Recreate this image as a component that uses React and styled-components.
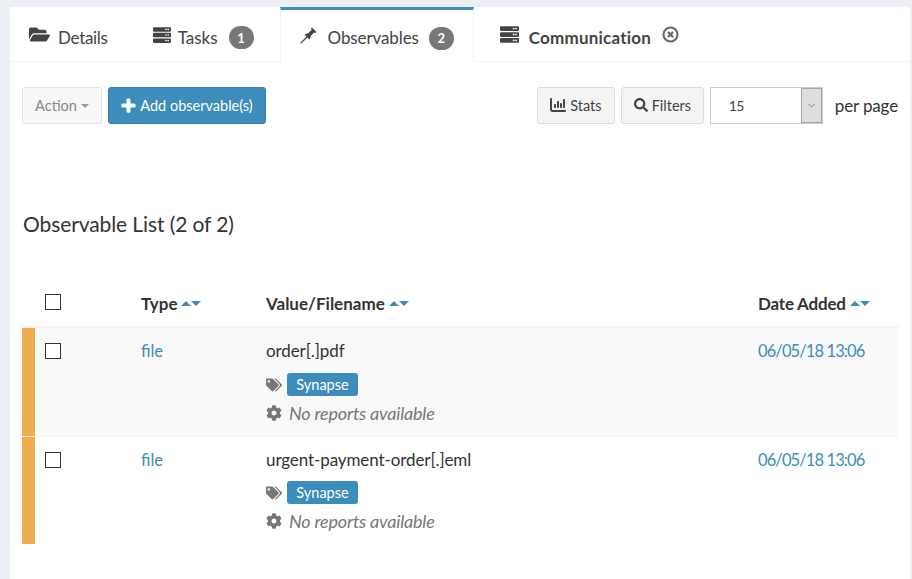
import React from 'react';
import styled, { createGlobalStyle } from 'styled-components';
import { FaFolderOpen, FaServer, FaPlus, FaSearch, FaTags, FaCog } from 'react-icons/fa';
import { FaChartColumn } from 'react-icons/fa6';
import { ChevronDown } from 'lucide-react';

const BLUE = '#3c8dbc';
const FONT = '"Lato", "Open Sans", sans-serif';

const GlobalStyle = createGlobalStyle`
  html, body {
    margin: 0;
    height: 100%;
    overflow: hidden;
    background: #ecf0f5;
  }
  body {
    font-family: ${FONT};
    color: #333;
  }
`;

const Card = styled.div`
  margin: 7px 2px 0 10px;
  height: 572px;
  background: #fff;
  border-radius: 3px 3px 0 0;
`;

const TabBar = styled.div`
  display: flex;
  height: 55px;
  border-bottom: 1px solid #f4f4f4;
  box-sizing: border-box;
`;

const Tab = styled.div`
  display: flex;
  align-items: center;
  margin-right: 6px;
  padding: 3px 19px 0;
  height: ${(p) => (p.$active ? '55px' : '54px')};
  font-size: 17px;
  color: #444;
  box-sizing: border-box;
  background: #fff;
  font-weight: ${(p) => (p.$bold ? 700 : 400)};
  border-top: 3px solid ${(p) => (p.$active ? BLUE : 'transparent')};
  border-left: 1px solid ${(p) => (p.$active ? '#f4f4f4' : 'transparent')};
  border-right: 1px solid ${(p) => (p.$active ? '#f4f4f4' : 'transparent')};
  &:first-child {
    margin-right: 5px;
  }
  svg {
    color: #444;
    flex: none;
  }
`;

const TabLabel = styled.span`
  margin-left: ${(p) => p.$gap}px;
  letter-spacing: ${(p) => p.$spacing || 0}px;
  white-space: nowrap;
`;

const TabIcon = styled.span`
  display: inline-flex;
  margin-top: -5px;
  margin-left: ${(p) => p.$left || 0}px;
`;

const Badge = styled.span`
  display: inline-flex;
  align-items: center;
  justify-content: center;
  width: 25px;
  height: 23px;
  margin-left: ${(p) => p.$gap}px;
  margin-top: 1px;
  border-radius: 12px;
  background: #777;
  color: #fff;
  font-size: 13px;
  font-weight: 700;
`;

const CloseIcon = styled.span`
  display: inline-flex;
  margin-left: 11px;
  margin-top: -6px;
`;

const Toolbar = styled.div`
  display: flex;
  align-items: center;
  margin: 25px 12px 0;
  height: 37px;
`;

const Button = styled.div`
  display: flex;
  align-items: center;
  justify-content: center;
  gap: 4px;
  box-sizing: border-box;
  width: ${(p) => p.$width}px;
  height: 37px;
  margin-right: 6px;
  padding-bottom: 1px;
  border-radius: 3px;
  font-size: 14.5px;
  white-space: nowrap;
  border: 1px solid ${(p) => p.$border};
  background: ${(p) => p.$bg};
  color: ${(p) => p.$color};
`;

const Caret = styled.span`
  display: inline-block;
  margin-top: 2px;
  border-top: 4px solid #999;
  border-left: 4px solid transparent;
  border-right: 4px solid transparent;
`;

const Spacer = styled.div`
  flex: 1;
`;

const SelectBox = styled.div`
  display: flex;
  box-sizing: border-box;
  width: 113px;
  height: 37px;
  border: 1px solid #ccc;
  font-size: 14px;
  color: #444;
`;

const SelectValue = styled.div`
  flex: 1;
  display: flex;
  align-items: center;
  padding-left: 18px;
  letter-spacing: -0.8px;
`;

const SelectArrow = styled.div`
  display: flex;
  align-items: center;
  justify-content: center;
  width: 21px;
  background: #dedede;
  border: 1px solid #a6a6a6;
  box-sizing: border-box;
  svg {
    color: #555;
  }
`;

const PerPage = styled.span`
  margin-left: 12px;
  font-size: 17px;
  letter-spacing: -0.15px;
  white-space: nowrap;
`;

const Heading = styled.h3`
  margin: 87px 0 0 13px;
  font-size: 21px;
  line-height: 26px;
  font-weight: 400;
  letter-spacing: -0.1px;
  color: #333;
`;

const Table = styled.div`
  margin: 0 12px;
  padding-top: 57px;
`;

const Row = styled.div`
  display: grid;
  grid-template-columns: 13px 106px 125px 1fr 140px;
  height: ${(p) => p.$height}px;
  box-sizing: border-box;
  background: ${(p) => p.$bg || '#fff'};
  border-bottom: ${(p) => (p.$line ? `${p.$line}px solid #f4f4f4` : 'none')};
`;

const StatusBar = styled.div`
  background: ${(p) => p.$color};
`;

const CheckCell = styled.div`
  padding: ${(p) => p.$top}px 0 0 10px;
`;

const Checkbox = styled.div`
  width: 16px;
  height: 16px;
  box-sizing: border-box;
  border: 1.5px solid #333;
  background: #fff;
`;

const HeaderCell = styled.div`
  display: flex;
  align-items: flex-start;
  font-size: 17px;
  line-height: 20px;
  font-weight: 700;
  letter-spacing: ${(p) => p.$spacing || 0}px;
  white-space: nowrap;
`;

const Sort = styled.span`
  display: inline-flex;
  align-items: center;
  margin: 1px 0 0 4px;
  height: 16px;
`;

const SortUp = styled.i`
  border-bottom: 5px solid ${BLUE};
  border-left: 5.5px solid transparent;
  border-right: 5.5px solid transparent;
`;

const SortDown = styled.i`
  border-top: 5px solid ${BLUE};
  border-left: 5.5px solid transparent;
  border-right: 5.5px solid transparent;
`;

const LinkCell = styled.div`
  padding-top: 13px;
  font-size: 16.5px;
  line-height: 20px;
  letter-spacing: ${(p) => p.$spacing || 0}px;
  color: ${BLUE};
`;

const ValueCell = styled.div`
  padding-top: 13px;
`;

const Value = styled.div`
  font-size: 17px;
  line-height: 20px;
  letter-spacing: -0.1px;
`;

const Meta = styled.div`
  display: flex;
  align-items: center;
  height: 23px;
  margin-top: ${(p) => p.$top}px;
  svg {
    color: #777;
    flex: none;
  }
`;

const Tag = styled.span`
  display: inline-flex;
  align-items: center;
  justify-content: center;
  box-sizing: border-box;
  width: 71px;
  height: 23px;
  margin-left: 5px;
  padding-bottom: 1px;
  border-radius: 3px;
  background: ${BLUE};
  color: #fff;
  font-size: 14.5px;
`;

const Reports = styled.span`
  margin-left: 7px;
  font-size: 18px;
  font-style: italic;
  letter-spacing: -0.2px;
  color: #777;
`;

const observables = [
  { value: 'order[.]pdf', height: 109, bg: '#f9f9f9', line: 1, tagTop: 12 },
  { value: 'urgent-payment-order[.]eml', height: 107, line: 0, tagTop: 11 },
];

const SortCaret = () => (
  <Sort>
    <SortUp />
    <SortDown />
  </Sort>
);

const PinIcon = () => (
  <svg width="18" height="18" viewBox="0 0 18 18">
    <path d="M0.6 17.4L7 11" stroke="#444" strokeWidth="1.2" fill="none" />
    <path
      d="M4.5 8.5L9.5 13.5L11 9.5L14 6.5L15.5 7L16.5 6L12 1.5L11 2.5L11.5 4L8.5 7Z"
      fill="#444"
    />
  </svg>
);

const CircleX = () => (
  <svg width="17" height="17" viewBox="0 0 17 17">
    <circle cx="8.5" cy="8.5" r="7" fill="none" stroke="#666" strokeWidth="2" />
    <path d="M6 6L11 11M11 6L6 11" stroke="#666" strokeWidth="2.2" fill="none" />
  </svg>
);

const App = () => (
  <>
    <GlobalStyle />
    <Card>
      <TabBar>
        <Tab>
          <TabIcon $left={-1}><FaFolderOpen size={21} /></TabIcon>
          <TabLabel $gap={8} $spacing={-0.3}>Details</TabLabel>
        </Tab>
        <Tab>
          <TabIcon><FaServer size={18} /></TabIcon>
          <TabLabel $gap={7}>Tasks</TabLabel>
          <Badge $gap={11}>1</Badge>
        </Tab>
        <Tab $active>
          <TabIcon><PinIcon /></TabIcon>
          <TabLabel $gap={10} $spacing={-0.1}>Observables</TabLabel>
          <Badge $gap={10}>2</Badge>
        </Tab>
        <Tab $bold>
          <TabIcon><FaServer size={19} /></TabIcon>
          <TabLabel $gap={10} $spacing={0.2}>Communication</TabLabel>
          <CloseIcon><CircleX /></CloseIcon>
        </Tab>
      </TabBar>

      <Toolbar>
        <Button $width={80} $border="#e3e3e3" $bg="#f8f8f8" $color="#888">
          Action <Caret />
        </Button>
        <Button $width={158} $border="#367fa9" $bg={BLUE} $color="#fff">
          <FaPlus size={15} stroke="currentColor" strokeWidth={40} /> Add observable(s)
        </Button>
        <Spacer />
        <Button $width={78} $border="#ddd" $bg="#f4f4f4" $color="#444">
          <FaChartColumn size={16} /> Stats
        </Button>
        <Button $width={83} $border="#ddd" $bg="#f4f4f4" $color="#444">
          <FaSearch size={14} /> Filters
        </Button>
        <SelectBox>
          <SelectValue>15</SelectValue>
          <SelectArrow><ChevronDown size={11} strokeWidth={1.5} /></SelectArrow>
        </SelectBox>
        <PerPage>per page</PerPage>
      </Toolbar>

      <Heading>Observable List (2 of 2)</Heading>

      <Table>
        <Row $height={34} $line={2}>
          <div />
          <CheckCell $top={0}><Checkbox /></CheckCell>
          <HeaderCell>Type <SortCaret /></HeaderCell>
          <HeaderCell>Value/Filename <SortCaret /></HeaderCell>
          <HeaderCell $spacing={-0.2}>Date Added <SortCaret /></HeaderCell>
        </Row>
        {observables.map((item) => (
          <Row key={item.value} $height={item.height} $bg={item.bg} $line={item.line}>
            <StatusBar $color="#f0ad4e" />
            <CheckCell $top={15}><Checkbox /></CheckCell>
            <LinkCell>file</LinkCell>
            <ValueCell>
              <Value>{item.value}</Value>
              <Meta $top={item.tagTop}>
                <FaTags size={16} />
                <Tag>Synapse</Tag>
              </Meta>
              <Meta $top={5}>
                <FaCog size={16} />
                <Reports>No reports available</Reports>
              </Meta>
            </ValueCell>
            <LinkCell $spacing={-0.9}>06/05/18 13:06</LinkCell>
          </Row>
        ))}
      </Table>
    </Card>
  </>
);

export default App;
